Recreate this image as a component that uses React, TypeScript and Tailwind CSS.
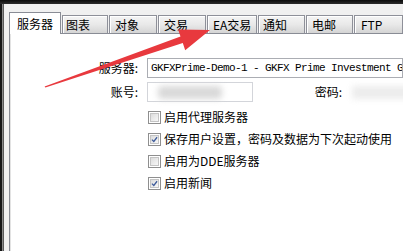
import React from "react";

const tabs: { label: string; cls: string }[] = [
  { label: "图表", cls: "w-[46px] pl-[3px]" },
  { label: "对象", cls: "w-[48px] pl-[5px]" },
  { label: "交易", cls: "w-[48px] pl-[5px]" },
  { label: "EA交易", cls: "w-[50px] pl-[5px]" },
  { label: "通知", cls: "w-[47px] pl-[4px]" },
  { label: "电邮", cls: "w-[47px] pl-[5px]" },
  { label: "FTP", cls: "w-[49px] pl-[6px]" },
  { label: "事件", cls: "w-[49px] pl-[5px]" },
];

function Checkbox({ checked }: { checked: boolean }) {
  return (
    <div className="w-[13px] h-[13px] border border-[#8f8f8f] bg-white p-[1px] shrink-0">
      <div className="w-full h-full bg-gradient-to-br from-[#dcdcdc] to-[#f7f7f7] border border-[#c4c4c4] relative">
        {checked && (
          <svg viewBox="0 0 9 9" className="absolute inset-0 w-full h-full">
            <path d="M1.2 4.6 L3.6 7 L7.8 1.6" fill="none" stroke="#3c5a9a" strokeWidth="1.6" />
          </svg>
        )}
      </div>
    </div>
  );
}

const rows: { label: string; checked: boolean }[] = [
  { label: "启用代理服务器", checked: false },
  { label: "保存用户设置，密码及数据为下次起动使用", checked: true },
  { label: "启用为DDE服务器", checked: false },
  { label: "启用新闻", checked: true },
];

export default function App() {
  return (
    <div
      className="w-[403px] h-[251px] overflow-hidden relative bg-[#f0f0f0] flex flex-col text-[12px] text-black leading-none"
      style={{ fontFamily: '"Noto Sans CJK SC", "Liberation Sans", sans-serif' }}
    >
      <div className="h-[4px] shrink-0 bg-gradient-to-b from-[#0c0c0c] to-[#2c2c2c]" />
      <div className="flex flex-1 min-h-0">
        <div className="w-[2px] shrink-0 bg-[#161616]" />
        <div className="w-[1px] shrink-0 bg-[#8a8a8a]" />
        <div className="w-[1px] shrink-0 bg-[#5a5a5a]" />
        <div className="flex-1 min-w-0 flex flex-col pl-[5px] pt-[8px]">
          {/* tab strip */}
          <div className="flex items-end h-[21px] shrink-0 whitespace-nowrap">
            <div className="w-[52px] h-[22px] -mb-px relative z-10 bg-white border border-b-0 border-[#898c95] flex items-center justify-center text-[12px] shrink-0">
              服务器
            </div>
            {tabs.map((t) => (
              <div
                key={t.label}
                className={`${t.cls} h-[18px] ml-[1px] shrink-0 border border-b-0 border-[#8e9099] bg-gradient-to-b from-[#f4f4f4] via-[#e9e9e9] to-[#d4d4d4] shadow-[inset_1px_1px_0_#ffffff] flex items-center overflow-hidden`}
              >
                {t.label}
              </div>
            ))}
          </div>
          {/* panel */}
          <div className="flex-1 bg-white border-l border-t border-[#898c95] shadow-[inset_1px_0_0_#e3e3e3] flex flex-col pt-[24px]">
            <div className="flex items-center h-[20px]">
              <div className="w-[130px] text-right pr-[2px] shrink-0">服务器:</div>
              <div className="ml-[7px] flex-1 h-[20px] border border-[#abadb3] flex items-center pl-[3px] whitespace-nowrap overflow-hidden">
                <span
                  className="text-[11px] tracking-[-0.6px]"
                  style={{ fontFamily: '"Liberation Mono", monospace' }}
                >
                  GKFXPrime-Demo-1 - GKFX Prime Investment Group
                </span>
              </div>
            </div>
            <div className="flex items-center h-[20px] mt-[4px]">
              <div className="w-[130px] text-right pr-[2px] shrink-0">账号:</div>
              <div className="ml-[7px] w-[106px] h-[20px] border border-[#d3d5da] flex items-center pl-[10px] shrink-0">
                <div className="w-[64px] h-[13px] bg-[#d9d9d9] blur-[3px] rounded-sm" />
              </div>
              <div className="w-[90px] text-right pr-[1px] shrink-0">密码:</div>
              <div className="ml-[3px] flex-1 h-[20px] flex items-center pl-[6px]">
                <div className="w-[60px] h-[13px] bg-[#ececec] blur-[3px]" />
              </div>
            </div>
            <div className="flex flex-col mt-[4px] pl-[138px]">
              {rows.map((r) => (
                <div key={r.label} className="flex items-center h-[22px] gap-[3px] whitespace-nowrap">
                  <Checkbox checked={r.checked} />
                  <span>{r.label}</span>
                </div>
              ))}
            </div>
          </div>
        </div>
      </div>
      {/* red arrow annotation */}
      <svg className="absolute inset-0 pointer-events-none" width="403" height="251" viewBox="0 0 403 251">
        <polygon
          points="44.6,86.4 180.5,36.5 178.1,29.4 210,30 185.2,50.2 182.8,43.1 45.4,87.6"
          fill="#e8393e"
        />
      </svg>
    </div>
  );
}
